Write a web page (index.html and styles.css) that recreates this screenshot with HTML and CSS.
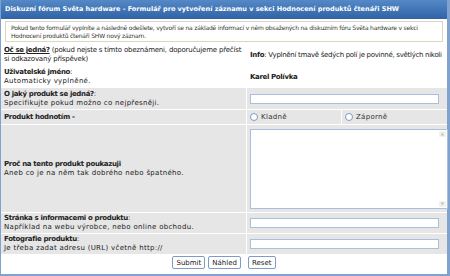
FILE: index.html
```html
<!doctype html>
<html lang="cs">
  <head>
    <meta charset="UTF-8" />
    <title>Formulář pro vytvoření záznamu</title>
    <link rel="stylesheet" href="styles.css">
  </head>
  <body>
    <div class="form-frame">
      <div class="form-title">Diskuzní fórum Světa hardware - Formulář pro vytvoření záznamu v sekci Hodnocení produktů čtenáři SHW</div>

      <div class="form-notice">
        Pokud tento formulář vyplníte a následně odešlete, vytvoří se na základě informací v něm obsažených na diskuzním fóru Světa hardware v sekci<br>
        Hodnocení produktů čtenáři SHW nový záznam.
      </div>

      <form class="review-form" onsubmit="return false">
        <table class="form-table">
          <colgroup>
            <col class="col-label">
            <col class="col-half">
            <col>
          </colgroup>
          <tr class="row-plain row-intro">
            <td class="cell-label cell-intro">
              <a href="#"><b>Oč se jedná?</b></a> (pokud nejste s tímto obeznámeni, doporučujeme přečíst<br>si odkazovaný příspěvek)
            </td>
            <td class="cell-field cell-info" colspan="2"><b>Info</b>: Vyplnění tmavě šedých polí je povinné, světlých nikoli</td>
          </tr>
          <tr class="row-plain row-user">
            <td class="cell-label"><b>Uživatelské jméno</b>:<br>Automaticky vyplněné.</td>
            <td class="cell-field" colspan="2"><b>Karel Polívka</b></td>
          </tr>
          <tr class="row-required">
            <td class="cell-label"><b>O jaký produkt se jedná?</b>:<br>Specifikujte pokud možno co nejpřesněji.</td>
            <td class="cell-field" colspan="2"><input type="text" class="text-input"></td>
          </tr>
          <tr class="row-required row-radio">
            <td class="cell-label"><b>Produkt hodnotím -</b></td>
            <td class="cell-field"><label><span class="radio"></span>Kladně</label></td>
            <td class="cell-field"><label><span class="radio"></span>Záporně</label></td>
          </tr>
          <tr class="row-required row-text">
            <td class="cell-label"><b>Proč na tento produkt poukazuji</b><br>Aneb co je na něm tak dobrého nebo špatného.</td>
            <td class="cell-field" colspan="2">
              <div class="text-area">
                <span class="scroll-arrow">&#9650;</span>
                <span class="scroll-arrow">&#9660;</span>
              </div>
            </td>
          </tr>
          <tr class="row-optional">
            <td class="cell-label"><b>Stránka s informacemi o produktu</b>:<br>Například na webu výrobce, nebo online obchodu.</td>
            <td class="cell-field" colspan="2"><input type="text" class="text-input"></td>
          </tr>
          <tr class="row-optional">
            <td class="cell-label"><b>Fotografie produktu</b>:<br>Je třeba zadat adresu (URL) včetně http://</td>
            <td class="cell-field" colspan="2"><input type="text" class="text-input"></td>
          </tr>
        </table>

        <div class="form-actions">
          <button class="btn">Submit</button>
          <button class="btn">Náhled</button>
          <button class="btn btn-reset">Reset</button>
        </div>
      </form>
    </div>
  </body>
</html>
```

FILE: styles.css
```css
body {
  margin: 0;
  padding: 0;
  background: #fff;
  font-family: "DejaVu Sans", Verdana, sans-serif;
  font-size: 7px;
  line-height: 9px;
  letter-spacing: 0.3px;
  color: #222;
}

b {
  letter-spacing: -0.35px;
}

.form-frame {
  width: 450px;
  height: 276px;
  box-sizing: border-box;
  border: 1px solid #7fa2cf;
  border-top: none;
  border-right-width: 3px;
  border-bottom-width: 2px;
}

.form-title {
  height: 19px;
  padding-left: 4px;
  display: flex;
  align-items: center;
  background: linear-gradient(#5488c6, #2f63a6);
  color: #fff;
  font-weight: bold;
  font-size: 6.5px;
  letter-spacing: 0;
}

.form-notice {
  margin: 2px 4px 0 4px;
  height: 21px;
  box-sizing: border-box;
  padding: 2px 5px;
  border: 1px solid #dcd6c0;
  font-size: 6px;
  line-height: 8px;
  letter-spacing: -0.2px;
  white-space: nowrap;
  color: #333;
}

.form-table {
  width: 100%;
  margin-top: 1px;
  border-collapse: separate;
  border-spacing: 0 1px;
  table-layout: fixed;
}

.col-label {
  width: 245px;
}

.col-half {
  width: 95px;
}

.form-table td {
  padding: 0 3px;
  vertical-align: middle;
}

.cell-label {
  padding-right: 26px !important;
}

.cell-intro {
  padding-right: 0 !important;
  white-space: nowrap;
  letter-spacing: -0.2px;
}

.cell-field {
  border-left: 1px solid #fff;
}

.cell-info {
  white-space: nowrap;
  letter-spacing: -0.3px;
}

.cell-info b {
  letter-spacing: -0.3px;
}

.row-intro td {
  height: 22px;
}

.row-user td {
  height: 20px;
}

.row-required td,
.row-optional td {
  background: #e6e6e6;
}

.row-required td {
  height: 21px;
}

.row-optional td {
  height: 20px;
}

.row-radio td {
  height: 14px;
}

.row-text td {
  height: 87px;
}

a {
  color: #222;
}

.text-input {
  display: block;
  width: 189px;
  height: 10px;
  box-sizing: border-box;
  margin: 0;
  border: 1px solid #a9bfdc;
  background: #fff;
}

.row-radio label {
  display: flex;
  align-items: center;
  gap: 3px;
  color: #333;
}

.radio {
  width: 6px;
  height: 6px;
  border: 1px solid #7c9bc4;
  border-radius: 50%;
  background: #fff;
}

.text-area {
  height: 80px;
  width: 198px;
  box-sizing: border-box;
  border: 1px solid #a9bfdc;
  background: #fff;
  display: flex;
  flex-direction: column;
  align-items: flex-end;
  justify-content: space-between;
  padding: 1px;
}

.scroll-arrow {
  width: 7px;
  height: 6px;
  font-size: 4px;
  line-height: 6px;
  text-align: center;
  color: #c0c0c0;
  background: #f2f2ee;
}

.form-actions {
  display: flex;
  justify-content: center;
  gap: 3px;
  padding-top: 1px;
}

.btn {
  height: 13px;
  padding: 0 3px;
  font-family: inherit;
  font-size: 7px;
  letter-spacing: 0;
  color: #222;
  background: #fff;
  border: 1px solid #7f9dc4;
  border-radius: 2px;
}

.btn-reset {
  margin-left: 4px;
}
```
